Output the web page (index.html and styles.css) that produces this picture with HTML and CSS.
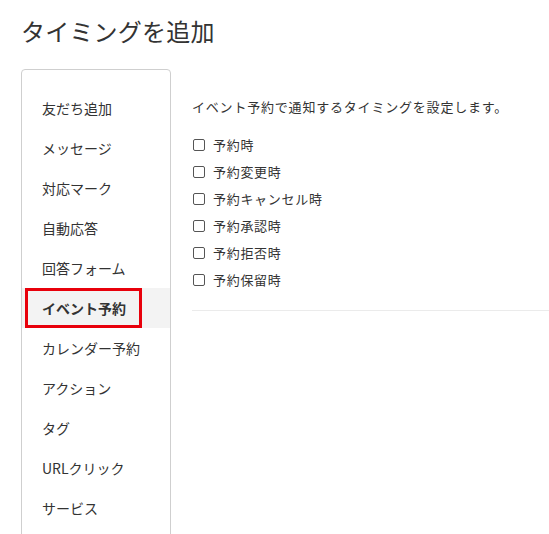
FILE: index.html
```html
<!DOCTYPE html>
<html lang="ja">
<head>
<meta charset="utf-8">
<title>タイミングを追加</title>
<link rel="stylesheet" href="styles.css">
</head>
<body>
<div class="page">
  <h1 class="title">タイミングを追加</h1>
  <div class="layout">
    <nav class="sidebar">
      <ul class="nav">
        <li class="nav-item">友だち追加</li>
        <li class="nav-item">メッセージ</li>
        <li class="nav-item">対応マーク</li>
        <li class="nav-item">自動応答</li>
        <li class="nav-item">回答フォーム</li>
        <li class="nav-item active">イベント予約<span class="mark"></span></li>
        <li class="nav-item">カレンダー予約</li>
        <li class="nav-item">アクション</li>
        <li class="nav-item">タグ</li>
        <li class="nav-item">URLクリック</li>
        <li class="nav-item">サービス</li>
      </ul>
    </nav>
    <section class="content">
      <p class="desc">イベント予約で通知するタイミングを設定します。</p>
      <ul class="checks">
        <li class="check"><span class="box"></span>予約時</li>
        <li class="check"><span class="box"></span>予約変更時</li>
        <li class="check"><span class="box"></span>予約キャンセル時</li>
        <li class="check"><span class="box"></span>予約承認時</li>
        <li class="check"><span class="box"></span>予約拒否時</li>
        <li class="check"><span class="box"></span>予約保留時</li>
      </ul>
      <div class="divider"></div>
    </section>
  </div>
</div>
</body>
</html>
```
FILE: styles.css
```css
* { box-sizing: border-box; }
html, body {
  margin: 0;
  padding: 0;
  background: #fff;
  overflow: hidden;
}
body {
  font-family: "Noto Sans CJK JP", "Noto Sans", sans-serif;
  color: #333;
}
.page {
  padding: 14px 0 0 21px;
}
.title {
  margin: 0;
  font-size: 24px;
  font-weight: 400;
  line-height: 34px;
  color: #333;
  letter-spacing: 0.2px;
}
.layout {
  display: flex;
  gap: 21px;
  margin-top: 21px;
}
.sidebar {
  width: 150px;
  flex: none;
  height: 470px;
  border: 1px solid #cfcfcf;
  border-radius: 4px;
  padding-top: 18px;
}
.nav {
  list-style: none;
  margin: 0;
  padding: 0;
}
.nav-item {
  position: relative;
  height: 40px;
  line-height: 40px;
  padding-left: 20px;
  font-size: 14px;
  color: #333;
}
.nav-item.active {
  background: #f3f3f3;
  font-weight: 700;
}
.mark {
  position: absolute;
  left: 3px;
  top: 0;
  width: 117px;
  height: 40px;
  border: 3px solid #e8000b;
}
.content {
  flex: 1;
  padding-top: 28px;
}
.desc {
  margin: 0 0 14px;
  font-size: 13px;
  line-height: 20px;
  letter-spacing: 0.8px;
  color: #333;
}
.checks {
  list-style: none;
  margin: 0;
  padding: 0;
}
.check {
  display: flex;
  align-items: center;
  height: 27px;
  font-size: 13px;
  letter-spacing: 0.7px;
  color: #333;
}
.box {
  width: 12px;
  height: 12px;
  border: 1px solid #555;
  border-radius: 2px;
  margin: 0 8px 0 1px;
  background: #fff;
}
.divider {
  margin-top: 17px;
  border-top: 1px solid #ebebeb;
}
```
